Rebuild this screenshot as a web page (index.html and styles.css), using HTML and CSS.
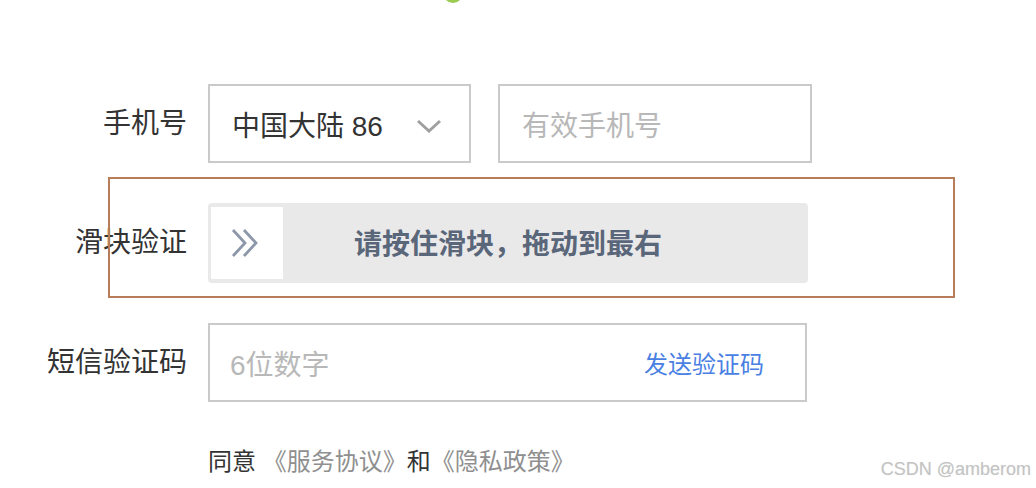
FILE: index.html
```html
<!DOCTYPE html>
<html lang="zh-CN">
<head>
<meta charset="utf-8">
<title>注册</title>
<link rel="stylesheet" href="styles.css">
</head>
<body>
<div class="page">
  <div class="logo"></div>
  <div class="form">
    <div class="label">手机号</div>
    <div class="ctrl phone-row">
      <div class="select">
        <span>中国大陆 86</span>
        <svg class="chev" width="26" height="14" viewBox="0 0 26 14"><polyline points="2,2 13,12 24,2" fill="none" stroke="#a0a0a0" stroke-width="3"/></svg>
      </div>
      <div class="input phone"><span class="ph">有效手机号</span></div>
    </div>

    <div class="label">滑块验证</div>
    <div class="ctrl slide-row">
      <div class="track">
        <div class="handle">
          <svg width="30" height="30" viewBox="0 0 30 30"><polyline points="3,2 15,15 3,28" fill="none" stroke="#8c97aa" stroke-width="2.8"/><polyline points="14,2 26,15 14,28" fill="none" stroke="#8c97aa" stroke-width="2.8"/></svg>
        </div>
        <div class="track-text">请按住滑块，拖动到最右</div>
      </div>
      <div class="highlight"></div>
    </div>

    <div class="label">短信验证码</div>
    <div class="ctrl">
      <div class="input sms"><span class="ph">6位数字</span><span class="send">发送验证码</span></div>
    </div>

    <div></div>
    <div class="agree">同意 <span class="link">《服务协议》</span>和<span class="link">《隐私政策》</span></div>
  </div>
  <div class="watermark">CSDN @amberom</div>
</div>
</body>
</html>
```

FILE: styles.css
```css
html, body {
  margin: 0;
  padding: 0;
  background: #fff;
}
body {
  font-family: "Liberation Sans", "Noto Sans CJK SC", sans-serif;
  color: #333;
  width: 1036px;
  height: 488px;
  overflow: hidden;
}
.page {
  position: relative;
  height: 488px;
  overflow: hidden;
}
.logo {
  width: 20px;
  height: 20px;
  margin: -17px 0 0 443px;
  border-radius: 50%;
  background: radial-gradient(circle at 50% 40%, #b5dc6a, #8cc23f);
}
.form {
  display: grid;
  grid-template-columns: 187px auto;
  column-gap: 21px;
  row-gap: 40px;
  margin-top: 81px;
  align-items: center;
}
.label {
  font-size: 28px;
  text-align: right;
  white-space: nowrap;
  padding-bottom: 6px;
  color: #333;
}
.ctrl {
  display: flex;
  align-items: center;
}
.phone-row {
  gap: 27px;
}
.select {
  box-sizing: border-box;
  width: 263px;
  height: 79px;
  border: 2px solid #cacaca;
  display: flex;
  align-items: center;
  justify-content: space-between;
  padding: 0 27px 0 22px;
  font-size: 28px;
  color: #333;
}
.chev {
  display: block;
  margin-top: 4px;
}
.input {
  box-sizing: border-box;
  height: 79px;
  border: 2px solid #cacaca;
  display: flex;
  align-items: center;
  font-size: 28px;
}
.phone {
  width: 314px;
  padding-left: 22px;
}
.ph {
  color: #b8b8b8;
}
.slide-row {
  position: relative;
}
.track {
  box-sizing: border-box;
  width: 600px;
  height: 80px;
  background: #e9e9e9;
  border-radius: 4px;
  padding: 4px;
  display: flex;
  position: relative;
}
.handle {
  width: 72px;
  height: 72px;
  background: #fff;
  display: flex;
  align-items: center;
  justify-content: center;
  margin-left: -1px;
  padding-right: 4px;
  box-sizing: border-box;
}
.track-text {
  position: absolute;
  inset: 0;
  display: flex;
  align-items: center;
  justify-content: center;
  font-size: 28px;
  font-weight: 700;
  color: #5a6679;
  padding-bottom: 2px;
}
.highlight {
  position: absolute;
  left: -100px;
  top: -26px;
  width: 847px;
  height: 121px;
  box-sizing: border-box;
  border: 2px solid #b97c58;
  pointer-events: none;
}
.sms {
  width: 599px;
  height: 79px;
  padding: 0 41px 0 20px;
  justify-content: space-between;
}
.send {
  color: #4a7fe3;
  font-size: 24px;
}
.agree {
  font-size: 24px;
  color: #333;
  margin-top: 0;
}
.link {
  color: #8f8f8f;
}
.watermark {
  position: absolute;
  right: 5px;
  bottom: 8px;
  font-family: "Liberation Sans", sans-serif;
  font-size: 18px;
  color: #c4c4c4;
  text-shadow: 0 0 1px #e6e6e6;
}
```
